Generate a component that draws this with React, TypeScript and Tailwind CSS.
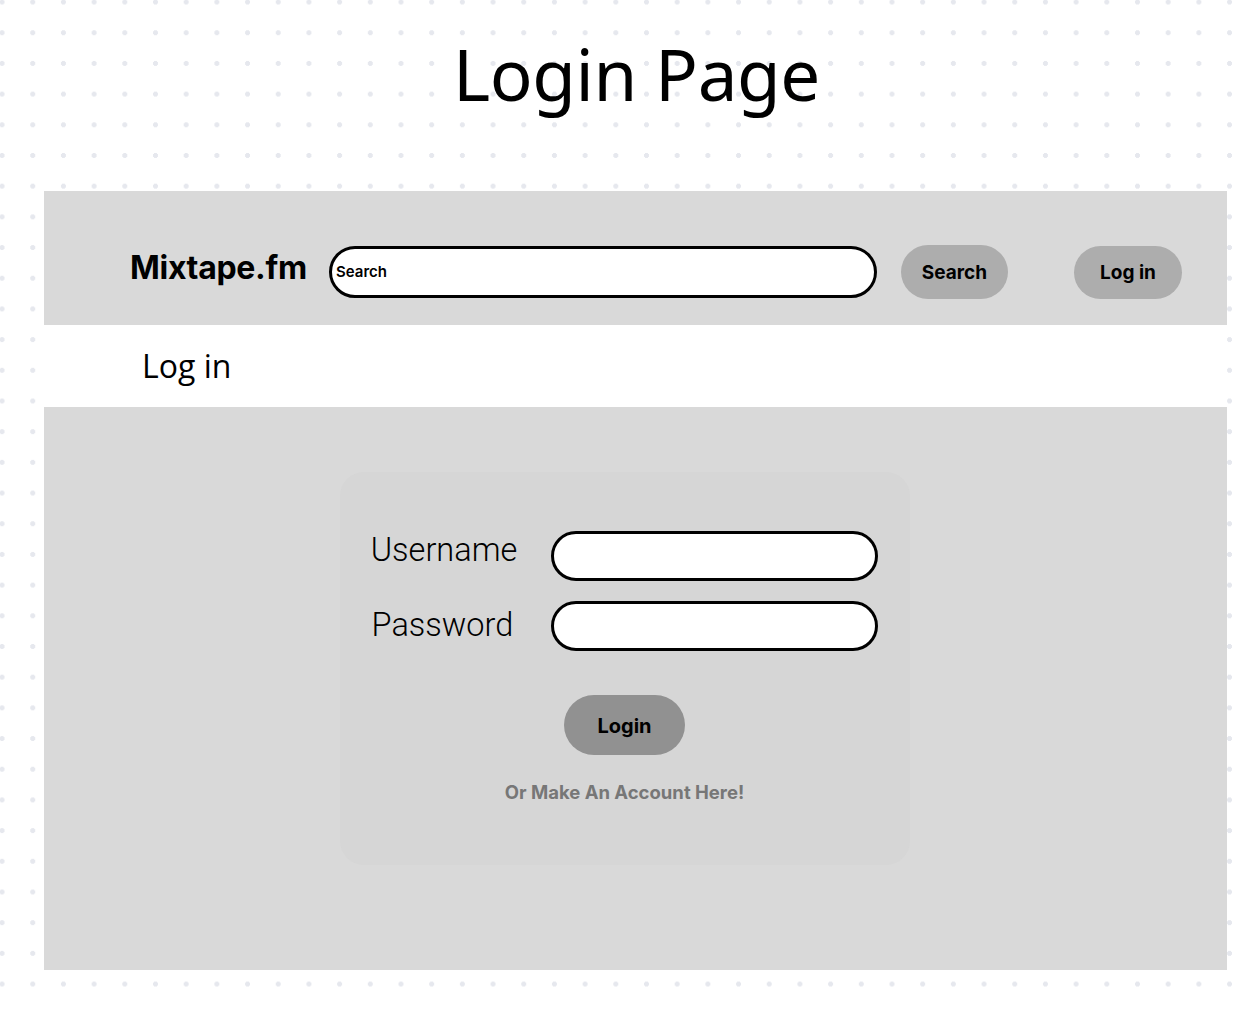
import React from 'react';

export default function App() {
  return (
    <div className="min-h-[1012px] w-[1257px] bg-white bg-[radial-gradient(circle,#e6e8ee_2.4px,transparent_2.6px)] bg-[size:30.7px_30.7px] bg-[position:-13.3px_-13.3px] font-['Noto_Sans',sans-serif] text-black">
      <h1 className="flex h-[191px] justify-center pt-[29px] pl-[16px] text-[71px] leading-[90px] font-normal tracking-[-0.4px]">
        Login Page
      </h1>

      <div className="ml-[44px] w-[1183px]">
        {/* header bar */}
        <div className="flex h-[134px] items-center bg-[#d9d9d9] pt-[28px] pl-[86px]">
          <div className="mb-[9px] w-[199px] font-['Inter',sans-serif] text-[32px] font-bold tracking-[-0.3px]">Mixtape.fm</div>
          <div className="flex h-[52px] w-[548px] items-center rounded-full border-[3.5px] border-black bg-white pl-[4px] font-['Inter',sans-serif] text-[15px] font-semibold">
            Search
          </div>
          <button className="ml-[24px] h-[54px] w-[107px] rounded-full bg-[#adadad] pt-[3px] font-['Inter',sans-serif] text-[19px] font-bold">
            Search
          </button>
          <button className="ml-[66px] h-[53px] w-[108px] rounded-full bg-[#adadad] pt-[3px] font-['Inter',sans-serif] text-[19px] font-bold">
            Log in
          </button>
        </div>

        {/* sub heading */}
        <div className="flex h-[82px] items-center bg-white pl-[98px] font-['Open_Sans',sans-serif] text-[32px]">Log in</div>

        {/* body */}
        <div className="flex h-[563px] justify-center bg-[#d9d9d9] pt-[65px] pr-[22px]">
          <div className="flex h-[393px] w-[570px] flex-col items-center rounded-[24px] bg-[#d6d6d6] pt-[59px]">
            <div className="grid grid-cols-[auto_327px] auto-rows-[50px] gap-x-[34px] gap-y-[20px]">
              <label className="self-start text-right font-['Roboto',sans-serif] text-[32.5px] leading-[38px] font-light">Username</label>
              <input className="h-[50px] rounded-full border-[3.5px] border-black bg-white outline-none" />
              <label className="self-start pr-[4px] text-right font-['Roboto',sans-serif] text-[32.5px] leading-[48px] font-light">Password</label>
              <input type="password" className="h-[50px] rounded-full border-[3.5px] border-black bg-white outline-none" />
            </div>
            <button className="mt-[44px] h-[60px] w-[121px] rounded-full bg-[#919191] pt-[2px] font-['Inter',sans-serif] text-[20px] font-bold">
              Login
            </button>
            <a className="mt-[24px] font-['Inter',sans-serif] text-[18.5px] font-bold text-[#777777]">Or Make An Account Here!</a>
          </div>
        </div>
      </div>
    </div>
  );
}
